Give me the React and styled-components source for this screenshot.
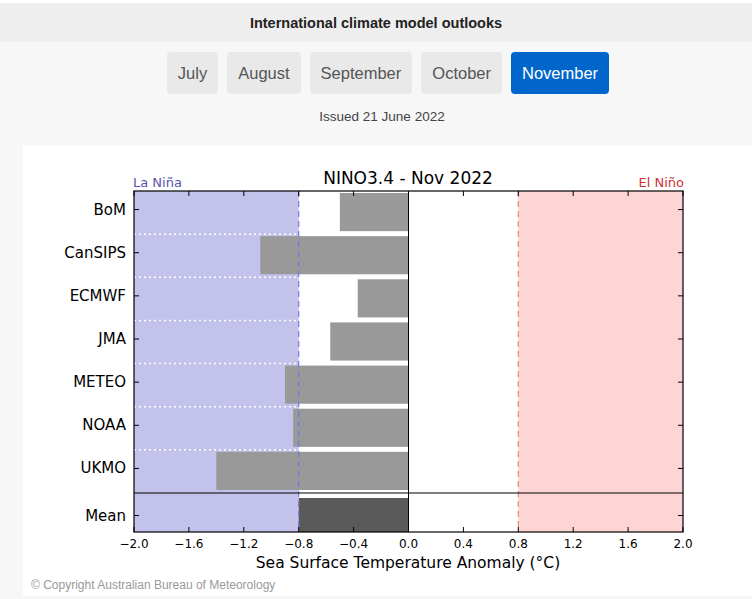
import React from "react";
import styled, { createGlobalStyle } from "styled-components";

const Global = createGlobalStyle`
  html, body { margin: 0; padding: 0; background: #f7f7f7; font-family: "Liberation Sans", Arial, sans-serif; }
`;
const Page = styled.div`
  width: 752px; height: 599px; overflow: hidden; border-top: 3px solid #fff; box-sizing: border-box;
`;
const Header = styled.div`
  height: 39px; background: #eeeeee; display: flex; align-items: center; justify-content: center;
  font-weight: bold; font-size: 14.5px; color: #222;
`;
const Tabs = styled.div`
  display: flex; justify-content: center; gap: 9px; margin-top: 10px; padding-left: 24px;
`;
const Tab = styled.button`
  height: 42px; padding: 0 11px; border: none; border-radius: 4px; font-family: inherit; font-size: 16.5px;
  background: ${p => (p.$active ? "#0066cc" : "#e9e9e9")}; color: ${p => (p.$active ? "#fff" : "#555")};
`;
const Issued = styled.div`
  text-align: center; font-size: 13.5px; color: #444; margin-top: 15px; padding-left: 12px;
`;
const Card = styled.div`
  margin: 22px 0 0 23px; background: #fff; height: 450px; display: flex; flex-direction: column;
`;
const Copy = styled.div`
  font-size: 12px; color: #999; padding-left: 8px; margin-top: 6px;
`;

const X0 = 134, X1 = 683, Y0 = 191, Y1 = 532, YM = 493;
const xs = v => X0 + ((v + 2) / 4) * (X1 - X0);
const rowH = (YM - Y0) / 7;
const data = [
  ["BoM", -0.5], ["CanSIPS", -1.08], ["ECMWF", -0.37], ["JMA", -0.57],
  ["METEO", -0.9], ["NOAA", -0.84], ["UKMO", -1.4],
];
const ticks = [-2, -1.6, -1.2, -0.8, -0.4, 0, 0.4, 0.8, 1.2, 1.6, 2];
const F = "DejaVu Sans, sans-serif";

function Chart() {
  const mc = (YM + Y1) / 2 + 3;
  return (
    <svg width="729" height="426" viewBox="23 146 729 426" style={{ display: "block" }}>
      <rect x={X0} y={Y0} width={xs(-0.8) - X0} height={Y1 - Y0} fill="#c2c2ea" />
      <rect x={xs(0.8)} y={Y0} width={X1 - xs(0.8)} height={Y1 - Y0} fill="#fdd5d5" />
      {[1, 2, 3, 4, 5, 6].map(i => (
        <line key={i} x1={X0} x2={xs(-0.8)} y1={Y0 + rowH * i} y2={Y0 + rowH * i} stroke="#fff" strokeWidth="1.5" strokeDasharray="2 3" />
      ))}
      {data.map(([n, v], i) => (
        <rect key={n} x={xs(v)} y={Y0 + rowH * i + 2} width={xs(0) - xs(v)} height={rowH - 5} fill="#999" />
      ))}
      <rect x={xs(-0.8)} y={YM + 5} width={xs(0) - xs(-0.8)} height={Y1 - YM - 5} fill="#5a5a5a" />
      <line x1={xs(-0.8)} x2={xs(-0.8)} y1={Y0} y2={Y1} stroke="#7777dd" strokeWidth="1.2" strokeDasharray="6 4" />
      <line x1={xs(0.8)} x2={xs(0.8)} y1={Y0} y2={Y1} stroke="#e08888" strokeWidth="1.2" strokeDasharray="6 4" />
      <line x1={xs(0)} x2={xs(0)} y1={Y0} y2={Y1} stroke="#000" strokeWidth="1" />
      <line x1={X0} x2={X1} y1={YM} y2={YM} stroke="#000" strokeWidth="1.2" />
      <rect x={X0} y={Y0} width={X1 - X0} height={Y1 - Y0} fill="none" stroke="#000" strokeWidth="1.2" />
      {ticks.map(t => (
        <g key={t}>
          <line x1={xs(t)} x2={xs(t)} y1={Y0} y2={Y0 + 5} stroke="#000" />
          <line x1={xs(t)} x2={xs(t)} y1={Y1} y2={Y1 - 5} stroke="#000" />
          <text x={xs(t)} y={Y1 + 16} fontFamily={F} fontSize="12" textAnchor="middle">
            {(t < 0 ? "\u2212" : "") + Math.abs(t).toFixed(1)}
          </text>
        </g>
      ))}
      {[...data.map(([n], i) => [n, Y0 + rowH * i + rowH / 2 - 3]), ["Mean", mc]].map(([n, cy]) => (
        <g key={n}>
          <line x1={X0} x2={X0 + 5} y1={cy} y2={cy} stroke="#000" />
          <line x1={X1} x2={X1 - 5} y1={cy} y2={cy} stroke="#000" />
          <text x={X0 - 8} y={cy + 5} fontFamily={F} fontSize="15" textAnchor="end">{n}</text>
        </g>
      ))}
      <text x={408} y={184} fontFamily={F} fontSize="17" textAnchor="middle">NINO3.4 - Nov 2022</text>
      <text x={X0 - 1} y={187} fontFamily={F} fontSize="13" fill="#5555aa">La Niña</text>
      <text x={X1 + 1} y={187} fontFamily={F} fontSize="13" fill="#cc3333" textAnchor="end">El Niño</text>
      <text x={408} y={568} fontFamily={F} fontSize="15.5" textAnchor="middle">Sea Surface Temperature Anomaly (°C)</text>
    </svg>
  );
}

export default function App() {
  const months = ["July", "August", "September", "October", "November"];
  return (
    <Page>
      <Global />
      <Header>International climate model outlooks</Header>
      <Tabs>{months.map(m => <Tab key={m} $active={m === "November"}>{m}</Tab>)}</Tabs>
      <Issued>Issued 21 June 2022</Issued>
      <Card>
        <Chart />
        <Copy>© Copyright Australian Bureau of Meteorology</Copy>
      </Card>
    </Page>
  );
}
